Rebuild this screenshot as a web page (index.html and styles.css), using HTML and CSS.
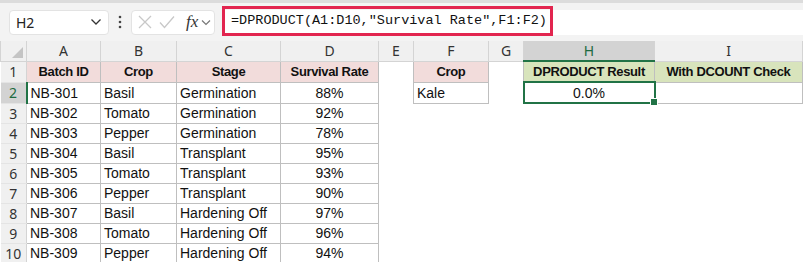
FILE: index.html
```html
<!DOCTYPE html>
<html lang="en">
<head>
    <meta charset="UTF-8">
    <title>DPRODUCT</title>
    <link rel="stylesheet" href="styles.css">
</head>
<body>
    <div class="topbar">
        <div class="namebox">
            <span>H2</span>
            <svg class="chev" width="12" height="8" viewBox="0 0 12 8"><path d="M1.5 1.5 L6 6 L10.5 1.5" fill="none" stroke="#333" stroke-width="1.3"/></svg>
        </div>
        <svg class="grip" width="4" height="14" viewBox="0 0 4 14"><circle cx="2" cy="2" r="1.3" fill="#444"/><circle cx="2" cy="7" r="1.3" fill="#444"/><circle cx="2" cy="12" r="1.3" fill="#444"/></svg>
        <div class="fxbox">
            <svg width="14" height="14" viewBox="0 0 14 14"><path d="M1 1 L13 13 M13 1 L1 13" stroke="#c8c8c8" stroke-width="1.3"/></svg>
            <svg width="16" height="14" viewBox="0 0 16 14"><path d="M1 7.5 L5.5 12.5 L15 1.5" fill="none" stroke="#c8c8c8" stroke-width="1.3"/></svg>
            <span class="fx">fx</span>
            <svg class="chev-sm" width="10" height="7" viewBox="0 0 10 7"><path d="M1 1.5 L5 5.5 L9 1.5" fill="none" stroke="#777" stroke-width="1.2"/></svg>
        </div>
        <div class="formula">
            <span class="formula-text">=DPRODUCT(A1:D10,"Survival Rate",F1:F2)</span>
        </div>
    </div>

    <table class="sheet">
        <colgroup>
            <col style="width:26px"><col style="width:74px"><col style="width:76px"><col style="width:104px"><col style="width:98px">
            <col style="width:35px"><col style="width:75px"><col style="width:35px"><col style="width:131px"><col style="width:148px">
        </colgroup>
        <tr class="colhead">
            <th class="corner"><span class="tri"></span></th>
            <th>A</th><th>B</th><th>C</th><th>D</th><th>E</th><th>F</th><th>G</th><th class="sel">H</th><th>I</th>
        </tr>
        <tr>
            <th class="rowhead">1</th>
            <td class="b hd pink">Batch ID</td><td class="b hd pink">Crop</td><td class="b hd pink">Stage</td><td class="b hd pink">Survival Rate</td>
            <td></td><td class="b hd pink">Crop</td><td></td>
            <td class="b hd green">DPRODUCT Result</td><td class="b hd green">With DCOUNT Check</td>
        </tr>
        <tr>
            <th class="rowhead sel">2</th>
            <td class="b">NB-301</td><td class="b">Basil</td><td class="b">Germination</td><td class="b c">88%</td>
            <td></td><td class="b">Kale</td><td></td>
            <td class="b c active">0.0%<span class="handle"></span></td><td class="b"></td>
        </tr>
        <tr>
            <th class="rowhead">3</th>
            <td class="b">NB-302</td><td class="b">Tomato</td><td class="b">Germination</td><td class="b c">92%</td>
            <td colspan="5"></td>
        </tr>
        <tr>
            <th class="rowhead">4</th>
            <td class="b">NB-303</td><td class="b">Pepper</td><td class="b">Germination</td><td class="b c">78%</td>
            <td colspan="5"></td>
        </tr>
        <tr>
            <th class="rowhead">5</th>
            <td class="b">NB-304</td><td class="b">Basil</td><td class="b">Transplant</td><td class="b c">95%</td>
            <td colspan="5"></td>
        </tr>
        <tr>
            <th class="rowhead">6</th>
            <td class="b">NB-305</td><td class="b">Tomato</td><td class="b">Transplant</td><td class="b c">93%</td>
            <td colspan="5"></td>
        </tr>
        <tr>
            <th class="rowhead">7</th>
            <td class="b">NB-306</td><td class="b">Pepper</td><td class="b">Transplant</td><td class="b c">90%</td>
            <td colspan="5"></td>
        </tr>
        <tr>
            <th class="rowhead">8</th>
            <td class="b">NB-307</td><td class="b">Basil</td><td class="b">Hardening Off</td><td class="b c">97%</td>
            <td colspan="5"></td>
        </tr>
        <tr>
            <th class="rowhead">9</th>
            <td class="b">NB-308</td><td class="b">Tomato</td><td class="b">Hardening Off</td><td class="b c">96%</td>
            <td colspan="5"></td>
        </tr>
        <tr>
            <th class="rowhead">10</th>
            <td class="b">NB-309</td><td class="b">Pepper</td><td class="b">Hardening Off</td><td class="b c">94%</td>
            <td colspan="5"></td>
        </tr>
    </table>
</body>
</html>
```

FILE: styles.css
```css
body {
    margin: 0;
    background: #ffffff;
    font-family: 'Liberation Sans', Arial, sans-serif;
    overflow: hidden;
}

/* formula bar */
.topbar {
    height: 38px;
    border-top: 3px solid #dcdcdc;
    background: #f3f3f3;
    display: flex;
    align-items: center;
    gap: 0;
}

.namebox {
    margin-left: 9px;
    width: 100px;
    height: 25px;
    box-sizing: border-box;
    background: #fff;
    border: 1px solid #e3e3e3;
    border-radius: 4px;
    display: flex;
    align-items: center;
    justify-content: space-between;
    padding: 0 6px 0 6px;
    font-family: 'Noto Sans', sans-serif;
    font-size: 14px;
    color: #222;
}

.grip {
    margin: 0 9px 0 9px;
}

.fxbox {
    width: 84px;
    height: 25px;
    box-sizing: border-box;
    background: #fff;
    border: 1px solid #e3e3e3;
    border-radius: 4px;
    display: flex;
    align-items: center;
    gap: 7px;
    padding-left: 6px;
}

.fx {
    font-family: 'Liberation Serif', serif;
    font-style: italic;
    font-size: 17px;
    color: #333;
    margin-left: 4px;
    margin-right: -4px;
}

.formula {
    margin-left: 7px;
    flex: 1;
    height: 25px;
    background: #fff;
}

.formula-text {
    display: inline-block;
    height: 30px;
    margin-top: -4px;
    box-sizing: border-box;
    border: 3px solid #e2254f;
    padding: 0 0 0 6px;
    width: 331px;
    font-family: 'Liberation Mono', monospace;
    font-size: 13.5px;
    line-height: 24px;
    color: #111;
}

/* grid */
.sheet {
    border-collapse: collapse;
    table-layout: fixed;
    width: 802px;
}

.sheet th,
.sheet td {
    padding: 0 3px;
    height: 19px;
    font-size: 14px;
    white-space: nowrap;
    overflow: hidden;
}

.colhead th {
    height: 18px;
    background: #f0f0f0;
    border: 1px solid #d4d4d4;
    border-top: none;
    font-family: 'Noto Sans', sans-serif;
    font-weight: normal;
    font-size: 14px;
    color: #333;
}

.colhead th.sel {
    background: #d3d3d3;
    color: #1e6b40;
    border-bottom: 2px solid #217346;
}

.corner {
    position: relative;
}

.tri {
    position: absolute;
    right: 3px;
    bottom: 3px;
    width: 0;
    height: 0;
    border-left: 11px solid transparent;
    border-bottom: 11px solid #c4c4c4;
}

.rowhead {
    background: #f0f0f0;
    border-right: 1px solid #d4d4d4;
    border-bottom: 1px solid #e4e4e4;
    font-family: 'Noto Sans', sans-serif;
    font-weight: normal;
    font-size: 14px;
    color: #333;
    text-align: center;
}

.rowhead.sel {
    background: #d3d3d3;
    color: #1e6b40;
    border-right: 2px solid #217346;
}

td.b {
    border: 1px solid #bfbfbf;
    color: #111;
}

td.c {
    text-align: center;
}

td.hd {
    font-weight: bold;
    font-size: 13px;
    letter-spacing: -0.35px;
    text-align: center;
}

td.pink {
    background: #f2dcdb;
}

td.green {
    background: #d8e4bc;
}

td.active {
    position: relative;
    overflow: visible;
    border: 2px solid #217346;
}

.handle {
    position: absolute;
    right: -4px;
    bottom: -4px;
    width: 6px;
    height: 6px;
    background: #217346;
    border: 1px solid #fff;
}
```
